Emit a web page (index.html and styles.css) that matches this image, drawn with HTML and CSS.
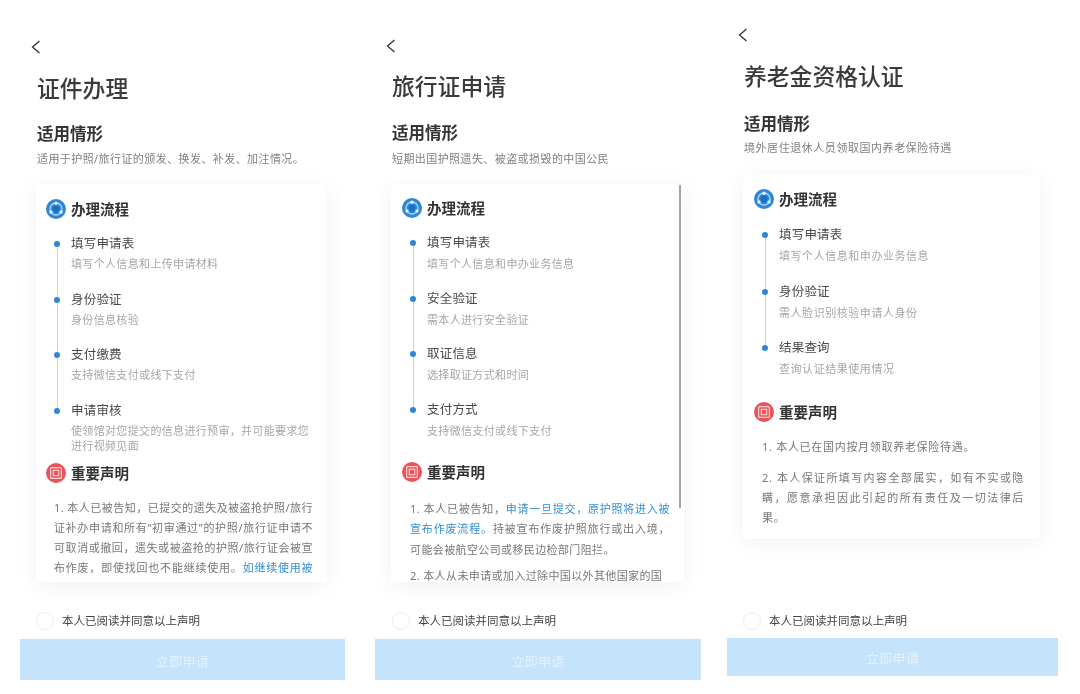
FILE: index.html
```html
<!DOCTYPE html>
<html lang="zh-CN">
<head>
<meta charset="utf-8">
<title>申请</title>
<link rel="stylesheet" href="styles.css">
</head>
<body>
<svg class="defs" width="0" height="0" aria-hidden="true">
  <symbol id="ic-flow" viewBox="0 0 20 20">
    <circle cx="10" cy="10" r="10" fill="#2c87d8"/>
    <circle cx="10" cy="10" r="6" fill="none" stroke="#a9d3f5" stroke-width="1.4"/>
    <circle cx="10" cy="10" r="3.4" fill="#1b6fc0"/>
    <circle cx="10" cy="4.2" r="1.7" fill="#dff0fd"/>
    <circle cx="5" cy="13" r="1.7" fill="#dff0fd"/>
    <circle cx="15" cy="13" r="1.7" fill="#dff0fd"/>
  </symbol>
  <symbol id="ic-note" viewBox="0 0 20 20">
    <circle cx="10" cy="10" r="10" fill="#e9545a"/>
    <rect x="4.6" y="4.6" width="10.8" height="10.8" rx="1" fill="none" stroke="#fbd3d3" stroke-width="1.2"/>
    <rect x="7.3" y="7.3" width="5.4" height="5.4" fill="none" stroke="#fbd3d3" stroke-width="1.1"/>
  </symbol>
</svg>
<main class="canvas">

  <section class="phone phone-a">
    <svg class="back" viewBox="0 0 10 14"><path d="M8.5 1 1.5 7l7 6" fill="none" stroke="#333" stroke-width="1.3"/></svg>
    <h1 class="title">证件办理</h1>
    <h2 class="sub">适用情形</h2>
    <p class="desc">适用于护照/旅行证的颁发、换发、补发、加注情况。</p>
    <div class="card">
      <h3 class="head"><svg class="ic"><use href="#ic-flow"/></svg>办理流程</h3>
      <ol class="steps">
        <li class="step"><b>填写申请表</b><span>填写个人信息和上传申请材料</span></li>
        <li class="step"><b>身份验证</b><span>身份信息核验</span></li>
        <li class="step"><b>支付缴费</b><span>支持微信支付或线下支付</span></li>
        <li class="step"><b>申请审核</b><span>使领馆对您提交的信息进行预审，并可能要求您进行视频见面</span></li>
      </ol>
      <h3 class="head head-note"><svg class="ic"><use href="#ic-note"/></svg>重要声明</h3>
      <p class="txt">1. 本人已被告知，已提交的遗失及被盗抢护照/旅行证补办申请和所有“初审通过”的护照/旅行证申请不可取消或撤回，遗失或被盗抢的护照/旅行证会被宣布作废，即使找回也不能继续使用。<a>如继续使用被</a></p>
    </div>
    <label class="agree"><i class="radio"></i>本人已阅读并同意以上声明</label>
    <div class="btn">立即申请</div>
  </section>

  <section class="phone phone-b">
    <svg class="back" viewBox="0 0 10 14"><path d="M8.5 1 1.5 7l7 6" fill="none" stroke="#333" stroke-width="1.3"/></svg>
    <h1 class="title">旅行证申请</h1>
    <h2 class="sub">适用情形</h2>
    <p class="desc">短期出国护照遗失、被盗或损毁的中国公民</p>
    <div class="card">
      <i class="scroll"></i>
      <h3 class="head"><svg class="ic"><use href="#ic-flow"/></svg>办理流程</h3>
      <ol class="steps">
        <li class="step"><b>填写申请表</b><span>填写个人信息和申办业务信息</span></li>
        <li class="step"><b>安全验证</b><span>需本人进行安全验证</span></li>
        <li class="step"><b>取证信息</b><span>选择取证方式和时间</span></li>
        <li class="step"><b>支付方式</b><span>支持微信支付或线下支付</span></li>
      </ol>
      <h3 class="head head-note"><svg class="ic"><use href="#ic-note"/></svg>重要声明</h3>
      <p class="txt">1. 本人已被告知，<a>申请一旦提交，原护照将进入被宣布作废流程。</a>持被宣布作废护照旅行或出入境，可能会被航空公司或移民边检部门阻拦。</p>
      <p class="txt">2. 本人从未申请或加入过除中国以外其他国家的国</p>
    </div>
    <label class="agree"><i class="radio"></i>本人已阅读并同意以上声明</label>
    <div class="btn">立即申请</div>
  </section>

  <section class="phone phone-c">
    <svg class="back" viewBox="0 0 10 14"><path d="M8.5 1 1.5 7l7 6" fill="none" stroke="#333" stroke-width="1.3"/></svg>
    <h1 class="title">养老金资格认证</h1>
    <h2 class="sub">适用情形</h2>
    <p class="desc">境外居住退休人员领取国内养老保险待遇</p>
    <div class="card">
      <h3 class="head"><svg class="ic"><use href="#ic-flow"/></svg>办理流程</h3>
      <ol class="steps">
        <li class="step"><b>填写申请表</b><span>填写个人信息和申办业务信息</span></li>
        <li class="step"><b>身份验证</b><span>需人脸识别核验申请人身份</span></li>
        <li class="step"><b>结果查询</b><span>查询认证结果使用情况</span></li>
      </ol>
      <h3 class="head head-note"><svg class="ic"><use href="#ic-note"/></svg>重要声明</h3>
      <p class="txt">1. 本人已在国内按月领取养老保险待遇。</p>
      <p class="txt">2. 本人保证所填写内容全部属实，如有不实或隐瞒，愿意承担因此引起的所有责任及一切法律后果。</p>
    </div>
    <label class="agree"><i class="radio"></i>本人已阅读并同意以上声明</label>
    <div class="btn">立即申请</div>
  </section>

</main>
</body>
</html>
```
FILE: styles.css
```css
* { box-sizing: border-box; margin: 0; padding: 0; }
html, body { width: 1080px; height: 694px; overflow: hidden; background: #fff; }
body { font-family: "Noto Sans", "Noto Sans CJK SC", sans-serif; color: #333; }
.defs { position: absolute; }
.canvas { display: flex; padding-left: 20px; height: 694px; filter: blur(.3px); }

.phone { display: flex; flex-direction: column; flex: none; }
.phone-a { width: 325px; padding-top: 40px; margin-right: 30px; }
.phone-b { width: 326px; padding-top: 39px; margin-right: 26px; }
.phone-c { width: 331px; padding-top: 28px; }

.back { width: 10px; height: 14px; margin-left: 11px; flex: none; }
.title { font-size: 22.8px; font-weight: 500; line-height: 34px; color: #3a3a3a; margin: 18px 0 0 17px; }
.phone-b .title { margin-top: 17px; }
.phone-c .title { margin-top: 18px; }
.sub { font-size: 16.5px; font-weight: 600; line-height: 24px; color: #333; margin: 16px 0 0 17px; }
.phone-b .sub { margin-top: 17px; }
.phone-c .sub { margin-top: 18px; }
.desc { font-size: 11px; letter-spacing: .42px; line-height: 16px; color: #808080; margin: 5px 0 0 17px; }
.phone-b .desc { margin-top: 6px; }
.phone-c .desc { margin-top: 4px; letter-spacing: .55px; }

.card {
  position: relative;
  margin: 17px 0 0 16px;
  width: 291px;
  height: 398px;
  padding: 13px 14px 0 10px;
  background: #fff;
  overflow: hidden;
  border-radius: 2px;
  box-shadow: 0 4px 22px rgba(0, 0, 0, .06);
}
.phone-b .card { width: 293px; margin-top: 17px; padding: 12px 14px 0 11px; }
.phone-c .card { width: 297px; height: 364px; margin-top: 19px; padding: 12px 16px 0 11px; border-radius: 6px; }

.scroll { position: absolute; right: 3px; top: 1px; width: 2px; height: 323px; background: #a3a3a3; }

.head { display: flex; align-items: center; gap: 5px; font-size: 14.5px; font-weight: 600; line-height: 24px; color: #333; }
.ic { width: 20px; height: 20px; flex: none; }

.steps { list-style: none; margin: 13px 0 0 8px; }
.phone-c .steps { margin-top: 14px; }
.step { position: relative; padding-left: 17px; min-height: 55.5px; }
.phone-c .step { min-height: 56.5px; }
.step::before { content: ""; position: absolute; left: 0; top: 7px; width: 6px; height: 6px; border-radius: 50%; background: #2c87d8; }
.step:not(:last-child)::after { content: ""; position: absolute; left: 3px; top: 13px; bottom: -7px; width: 1px; background: #b5d9f5; }
.step b { display: block; font-size: 12.5px; font-weight: 400; line-height: 20px; color: #4a4a4a; letter-spacing: .2px; }
.step span { display: block; font-size: 11px; letter-spacing: .34px; line-height: 15px; margin-top: 3px; color: #a6a6a6; }
.phone-a .step span { margin-top: 2px; }
.phone-c .step span { letter-spacing: .55px; }
.phone-a .step:last-child { min-height: 0; }

.head-note { margin-top: 8px; }
.phone-b .head-note { margin-top: 5px; }
.phone-c .head-note { margin-top: 5px; }

.txt { font-size: 11px; line-height: 20.3px; color: #777; letter-spacing: .38px; margin: 13px 0 0 8px; text-align: justify; }
.phone-a .txt { text-align-last: justify; }
.phone-b .txt { margin-top: 15px; }
.phone-c .txt { margin-top: 13px; letter-spacing: .7px; }
.phone-b .txt + .txt { margin-top: 6px; }
.phone-c .txt + .txt { margin-top: 11px; }
.txt a { color: #2f8fd6; }

.agree { display: flex; align-items: center; gap: 8px; font-size: 11.5px; line-height: 20px; color: #444; margin: 29px 0 0 16px; }
.phone-b .agree { margin-left: 17px; }
.phone-c .agree { margin-top: 72px; }
.radio { width: 18px; height: 18px; border-radius: 50%; border: 1px solid #e6edf1; background: #fff; flex: none; }

.btn { display: flex; align-items: center; justify-content: center; height: 41px; margin-top: 8px; padding-top: 1px; font-size: 13px; letter-spacing: .2px; color: #e3f1fd; background: #c5e3fb; }
.phone-c .btn { height: 38px; margin-top: 7px; }
```
